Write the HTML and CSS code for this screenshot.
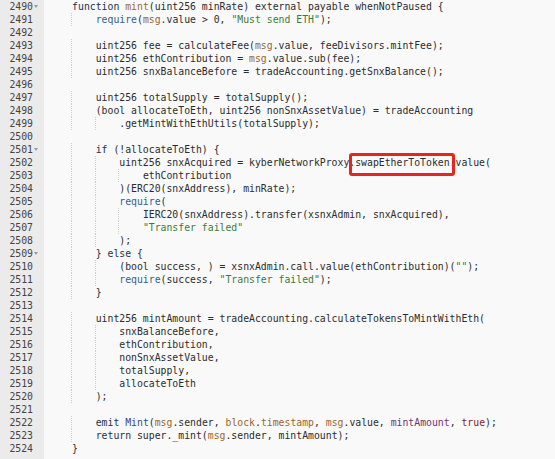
FILE: index.html
```html
<!DOCTYPE html>
<html>
<head>
<meta charset="utf-8">
<link rel="stylesheet" href="styles.css">
</head>
<body>
<div class="editor">
  <div class="row"><span class="ln">2490<i class="fold"></i></span><span class="code"><span class="u">    </span><span class="k">function</span> <span class="f">mint</span>(uint256 minRate) external payable whenNotPaused {</span></div>
  <div class="row"><span class="ln">2491</span><span class="code"><span class="u g">    </span><span class="u">    </span><span class="r">require</span>(<span class="b">msg</span>.value &gt; <span class="n">0</span>, <span class="s">"Must send ETH"</span>);</span></div>
  <div class="row"><span class="ln">2492</span><span class="code"></span></div>
  <div class="row"><span class="ln">2493</span><span class="code"><span class="u g">    </span><span class="u">    </span>uint256 fee = calculateFee(<span class="b">msg</span>.value, feeDivisors.mintFee);</span></div>
  <div class="row"><span class="ln">2494</span><span class="code"><span class="u g">    </span><span class="u">    </span>uint256 ethContribution = <span class="b">msg</span>.value.sub(fee);</span></div>
  <div class="row"><span class="ln">2495</span><span class="code"><span class="u g">    </span><span class="u">    </span>uint256 snxBalanceBefore = tradeAccounting.getSnxBalance();</span></div>
  <div class="row"><span class="ln">2496</span><span class="code"></span></div>
  <div class="row"><span class="ln">2497</span><span class="code"><span class="u g">    </span><span class="u">    </span>uint256 totalSupply = totalSupply();</span></div>
  <div class="row"><span class="ln">2498</span><span class="code"><span class="u g">    </span><span class="u">    </span>(bool allocateToEth, uint256 nonSnxAssetValue) = tradeAccounting</span></div>
  <div class="row"><span class="ln">2499</span><span class="code"><span class="u g">    </span><span class="u g">    </span><span class="u">    </span>.getMintWithEthUtils(totalSupply);</span></div>
  <div class="row"><span class="ln">2500</span><span class="code"></span></div>
  <div class="row"><span class="ln">2501<i class="fold"></i></span><span class="code"><span class="u g">    </span><span class="u">    </span><span class="k">if</span> (!allocateToEth) {</span></div>
  <div class="row"><span class="ln">2502</span><span class="code"><span class="u g">    </span><span class="u g">    </span><span class="u">    </span>uint256 snxAcquired = kyberNetworkProxy.swapEtherToToken.value(</span><span class="box"></span></div>
  <div class="row"><span class="ln">2503</span><span class="code"><span class="u g">    </span><span class="u g">    </span><span class="u g">    </span><span class="u">    </span>ethContribution</span></div>
  <div class="row"><span class="ln">2504</span><span class="code"><span class="u g">    </span><span class="u g">    </span><span class="u">    </span>)(ERC20(snxAddress), minRate);</span></div>
  <div class="row"><span class="ln">2505</span><span class="code"><span class="u g">    </span><span class="u g">    </span><span class="u">    </span><span class="r">require</span>(</span></div>
  <div class="row"><span class="ln">2506</span><span class="code"><span class="u g">    </span><span class="u g">    </span><span class="u g">    </span><span class="u">    </span>IERC20(snxAddress).transfer(xsnxAdmin, snxAcquired),</span></div>
  <div class="row"><span class="ln">2507</span><span class="code"><span class="u g">    </span><span class="u g">    </span><span class="u g">    </span><span class="u">    </span><span class="s">"Transfer failed"</span></span></div>
  <div class="row"><span class="ln">2508</span><span class="code"><span class="u g">    </span><span class="u g">    </span><span class="u">    </span>);</span></div>
  <div class="row"><span class="ln">2509<i class="fold"></i></span><span class="code"><span class="u g">    </span><span class="u">    </span>} <span class="k">else</span> {</span></div>
  <div class="row"><span class="ln">2510</span><span class="code"><span class="u g">    </span><span class="u g">    </span><span class="u">    </span>(bool success, ) = xsnxAdmin.call.value(ethContribution)(<span class="s">""</span>);</span></div>
  <div class="row"><span class="ln">2511</span><span class="code"><span class="u g">    </span><span class="u g">    </span><span class="u">    </span><span class="r">require</span>(success, <span class="s">"Transfer failed"</span>);</span></div>
  <div class="row"><span class="ln">2512</span><span class="code"><span class="u g">    </span><span class="u">    </span>}</span></div>
  <div class="row"><span class="ln">2513</span><span class="code"></span></div>
  <div class="row"><span class="ln">2514</span><span class="code"><span class="u g">    </span><span class="u">    </span>uint256 mintAmount = tradeAccounting.calculateTokensToMintWithEth(</span></div>
  <div class="row"><span class="ln">2515</span><span class="code"><span class="u g">    </span><span class="u g">    </span><span class="u">    </span>snxBalanceBefore,</span></div>
  <div class="row"><span class="ln">2516</span><span class="code"><span class="u g">    </span><span class="u g">    </span><span class="u">    </span>ethContribution,</span></div>
  <div class="row"><span class="ln">2517</span><span class="code"><span class="u g">    </span><span class="u g">    </span><span class="u">    </span>nonSnxAssetValue,</span></div>
  <div class="row"><span class="ln">2518</span><span class="code"><span class="u g">    </span><span class="u g">    </span><span class="u">    </span>totalSupply,</span></div>
  <div class="row"><span class="ln">2519</span><span class="code"><span class="u g">    </span><span class="u g">    </span><span class="u">    </span>allocateToEth</span></div>
  <div class="row"><span class="ln">2520</span><span class="code"><span class="u g">    </span><span class="u">    </span>);</span></div>
  <div class="row"><span class="ln">2521</span><span class="code"></span></div>
  <div class="row"><span class="ln">2522</span><span class="code"><span class="u g">    </span><span class="u">    </span><span class="k">emit</span> <span class="e">Mint</span>(<span class="b">msg</span>.sender, <span class="b">block</span>.<span class="b">timestamp</span>, <span class="b">msg</span>.value, <span class="p">mintAmount</span>, <span class="t">true</span>);</span></div>
  <div class="row"><span class="ln">2523</span><span class="code"><span class="u g">    </span><span class="u">    </span><span class="k">return</span> super._mint(<span class="b">msg</span>.sender, mintAmount);</span></div>
  <div class="row"><span class="ln">2524</span><span class="code"><span class="u">    </span>}</span></div>
  <div class="row"><span class="ln"></span><span class="code"></span></div>
</div>
</body>
</html>
```
FILE: styles.css
```css
html, body {
  margin: 0;
  padding: 0;
  background: #f9f9f9;
}

.editor {
  width: 555px;
  height: 459px;
  overflow: hidden;
  font-family: "DejaVu Sans Mono", "Liberation Mono", monospace;
  font-size: 9.8px;
  color: #2c2c2c;
  background: linear-gradient(to right, #ebebeb 0 44px, #f9f9f9 44px);
}

.row {
  position: relative;
  display: flex;
  height: 13px;
  line-height: 13px;
  white-space: pre;
}

.ln {
  flex: 0 0 44px;
  box-sizing: border-box;
  padding-right: 11px;
  text-align: right;
  color: #444;
  position: relative;
}

.fold {
  position: absolute;
  left: 34px;
  top: 5px;
  width: 0;
  height: 0;
  border-left: 2.5px solid transparent;
  border-right: 2.5px solid transparent;
  border-top: 3px solid #9a9a9a;
}

.code {
  padding-left: 4.5px;
}

.u {
  display: inline-block;
  height: 13px;
  vertical-align: top;
}

.g {
  background-image: repeating-linear-gradient(to bottom, #cfcfcf 0 1px, transparent 1px 2px);
  background-size: 1px 100%;
  background-position: right top;
  background-repeat: no-repeat;
}

.k { color: #25324a; }
.f { color: #a06a2a; }
.r { color: #355d8f; }
.b { color: #9a6530; }
.s { color: #3f7a3c; }
.n { color: #2c2c2c; }
.t { color: #7e2424; }
.p { color: #6e3570; }
.e { color: #3a4a85; }

.box {
  position: absolute;
  left: 349px;
  top: -3px;
  width: 106px;
  height: 23px;
  box-sizing: border-box;
  border: 3px solid #e8251c;
  border-radius: 3px;
}
```
